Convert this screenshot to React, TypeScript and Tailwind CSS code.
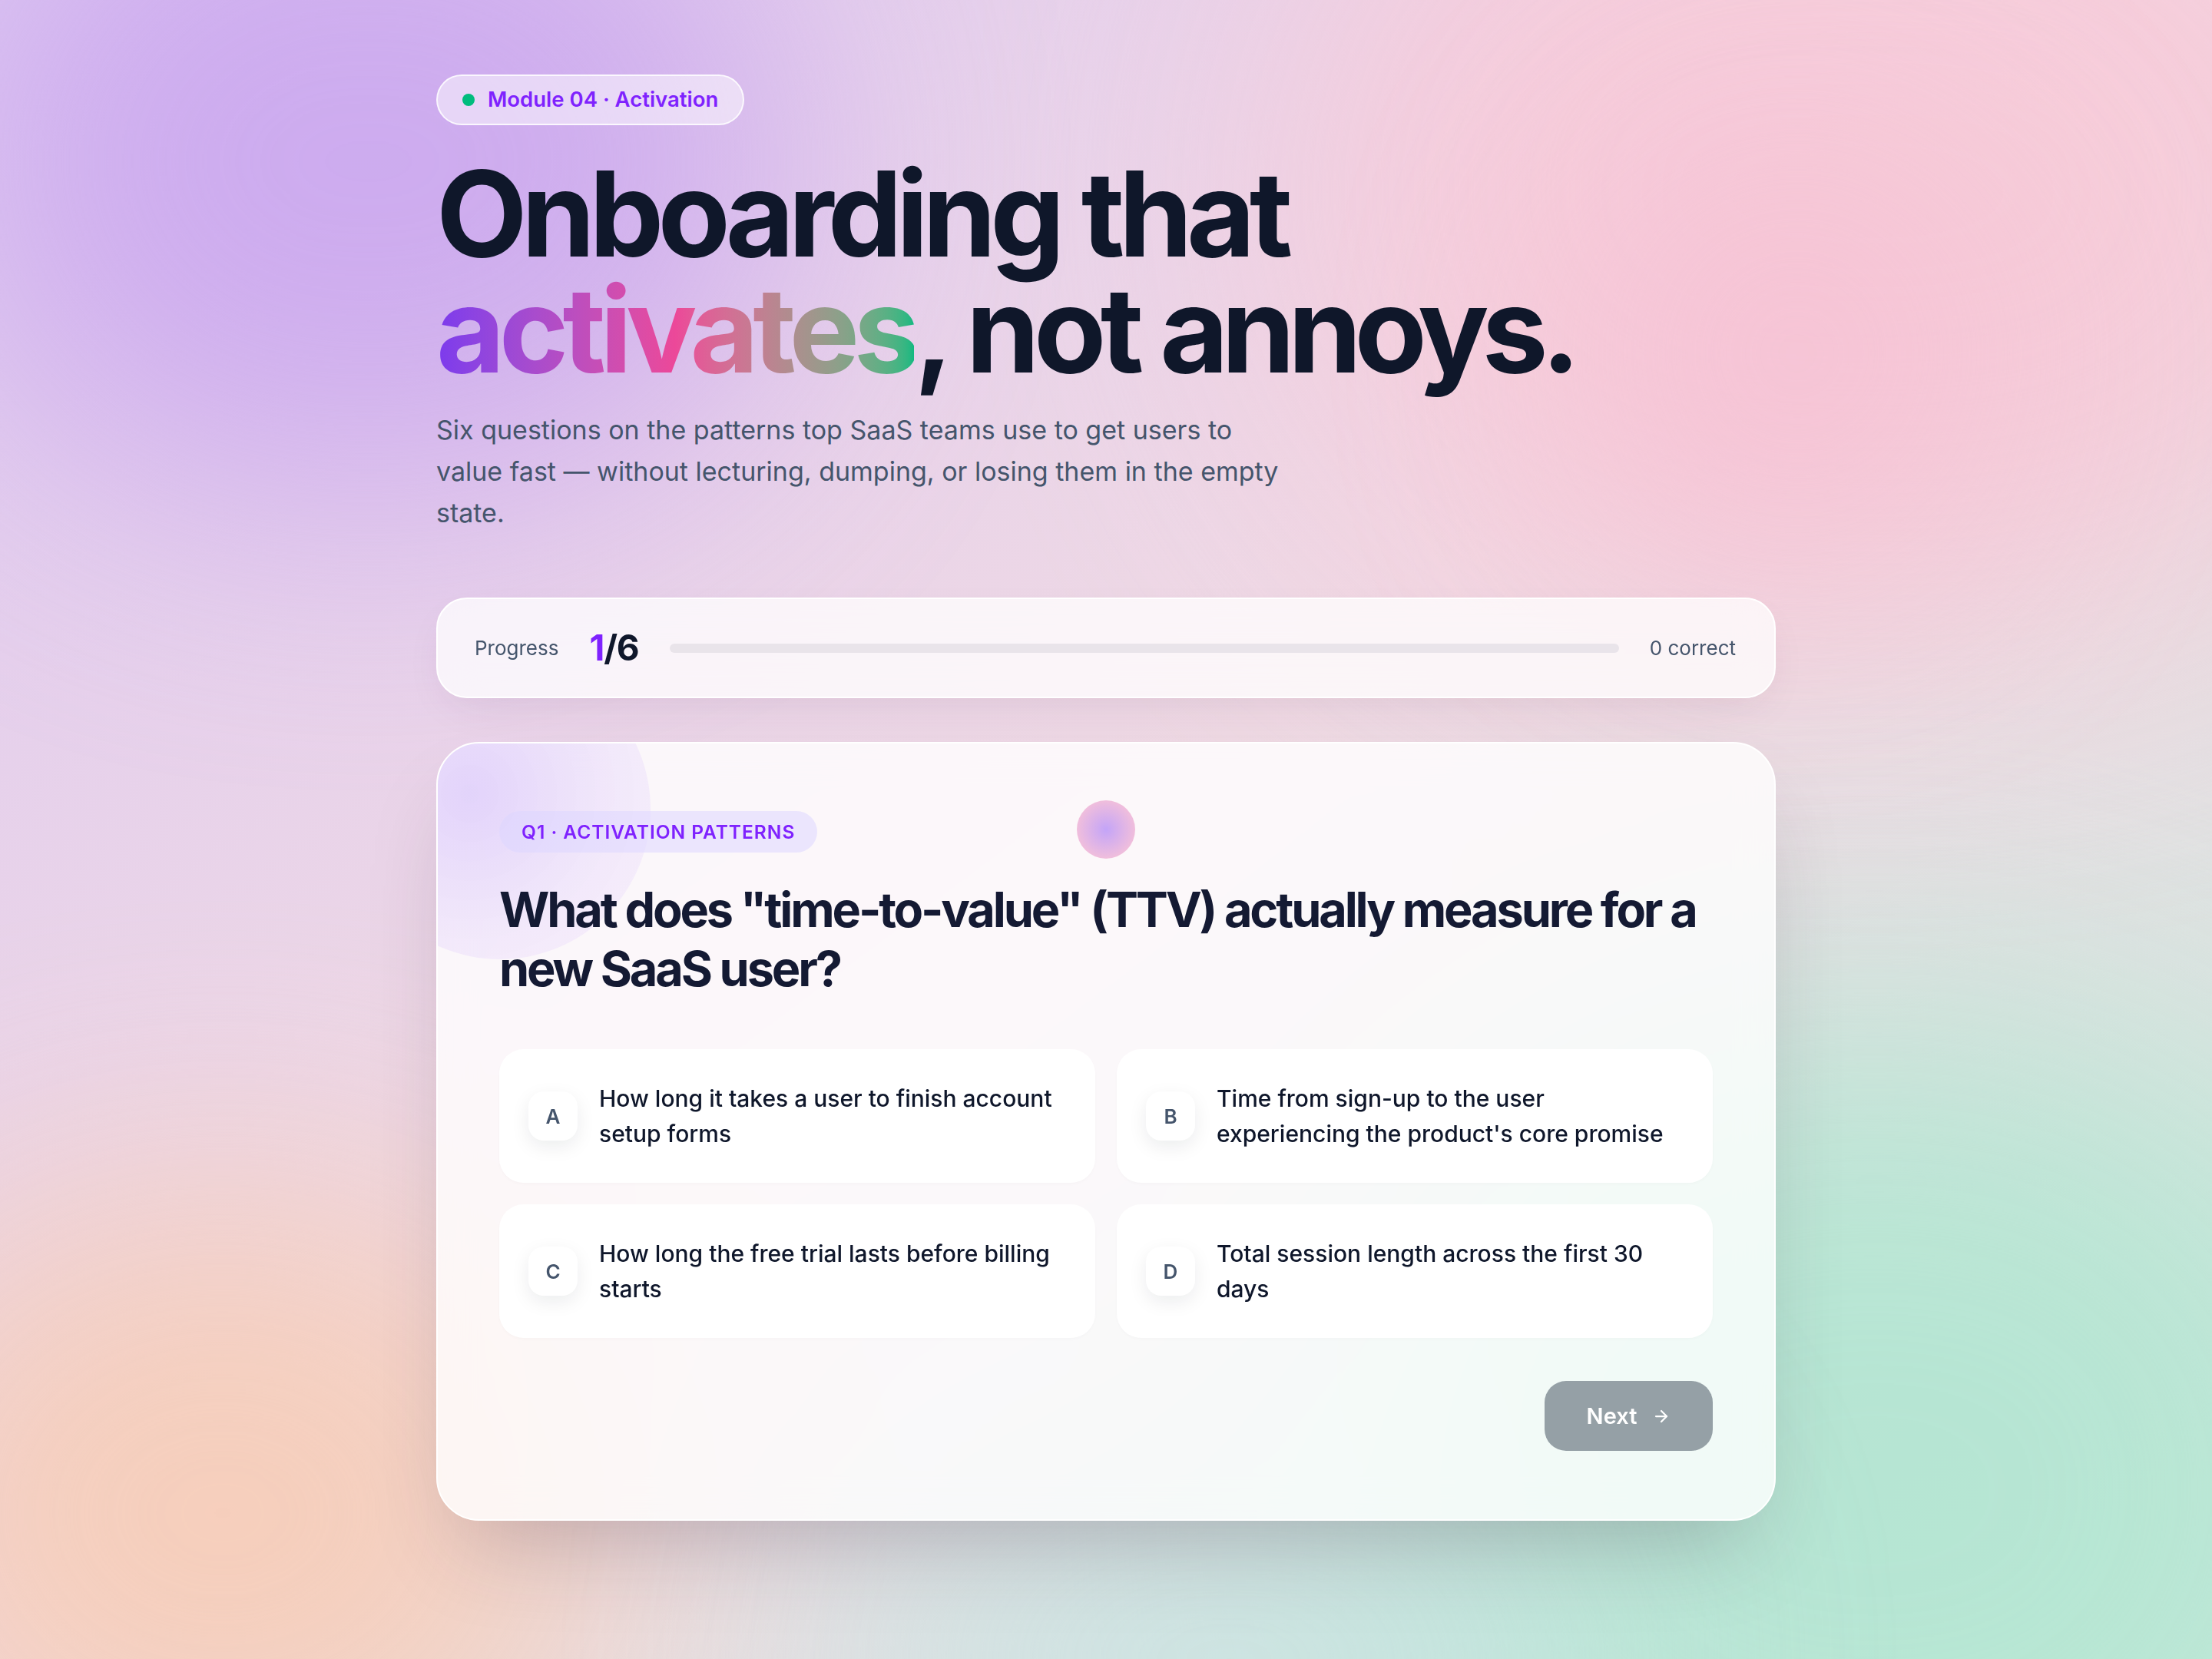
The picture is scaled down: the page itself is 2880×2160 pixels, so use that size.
import React from 'react';
import { ArrowRight } from 'lucide-react';

const options = [
  { key: 'A', text: 'How long it takes a user to finish account setup forms' },
  { key: 'B', text: "Time from sign-up to the user experiencing the product's core promise" },
  { key: 'C', text: 'How long the free trial lasts before billing starts' },
  { key: 'D', text: 'Total session length across the first 30 days' },
];

export default function App() {
  return (
    <div className="relative min-h-screen overflow-hidden bg-[#eedbe6] font-['Inter',sans-serif] text-slate-900">
      {/* Background glow */}
      <div className="pointer-events-none absolute inset-0">
        <div className="absolute inset-0 bg-gradient-to-br from-[#dfcaf1] via-[#efd9e4] to-[#d3e9e0]" />
        <div className="absolute left-[-60px] top-[-220px] h-[860px] w-[1080px] rounded-full bg-[#c6a0ef] opacity-75 blur-[180px]" />
        <div className="absolute right-[-300px] top-[-300px] h-[1100px] w-[1500px] rounded-full bg-[#f8cad8] opacity-85 blur-[200px]" />
        <div className="absolute right-[260px] top-[180px] h-[560px] w-[560px] rounded-full bg-[#f6bfd3] opacity-70 blur-[160px]" />
        <div className="absolute bottom-[-220px] left-[-200px] h-[820px] w-[980px] rounded-full bg-[#f7cdb5] opacity-85 blur-[180px]" />
        <div className="absolute bottom-[-380px] right-[-260px] h-[1200px] w-[1400px] rounded-full bg-[#b3e6d2] opacity-90 blur-[200px]" />
        <div className="absolute bottom-[-300px] left-[1100px] h-[600px] w-[1000px] rounded-full bg-[#c6e4e2] opacity-70 blur-[180px]" />
      </div>

      {/* cursor glow */}
      <div className="pointer-events-none absolute left-[1402px] top-[1042px] z-10 h-[76px] w-[76px] rounded-full bg-[radial-gradient(circle,#c3a4f8_0%,#f0bedc_70%,#f6c8dc_100%)]" />

      <main className="relative mx-auto w-[1744px] pt-[97px] pb-32">
        {/* Module badge */}
        <div className="inline-flex h-[66px] items-center gap-[17px] rounded-full border-2 border-white/80 bg-white/50 px-[32px] text-[27.5px] font-semibold text-violet-600">
          <span className="h-4 w-4 rounded-full bg-emerald-500" />
          Module 04 · Activation
        </div>

        <h1 className="mt-10 text-[154px] font-bold leading-[151px] tracking-[-0.05em] text-[#0f172a]">
          Onboarding that
          <br />
          <span className="bg-gradient-to-r from-[#7c3aed] via-[#ec4899] to-[#10b981] bg-clip-text text-transparent">
            activates
          </span>
          , not <span className="tracking-[-0.06em]">annoys</span>.
        </h1>

        <p className="mt-7 max-w-[1120px] text-[34px] leading-[54px] text-slate-600">
          Six questions on the patterns top SaaS teams use to get users to value fast — without lecturing,
          dumping, or losing them in the empty state.
        </p>

        {/* Progress */}
        <div className="mt-[83px] flex h-[131px] items-center gap-10 rounded-[40px] border-2 border-white bg-white/75 pl-12 pr-[50px] shadow-[0_20px_60px_-24px_rgba(80,40,90,0.15)] backdrop-blur-xl">
          <span className="text-[26px] text-slate-600">Progress</span>
          <span className="text-[46px] font-bold tracking-tight text-slate-900">
            <span className="text-violet-600">1</span>/6
          </span>
          <div className="h-3 flex-1 rounded-full bg-[#e9e4ea]" />
          <span className="text-[26px] text-slate-600">0 correct</span>
        </div>

        {/* Question card */}
        <section className="relative mt-[57px] overflow-hidden rounded-[56px] border-2 border-white bg-white/80 px-20 pt-[88px] pb-[89px] shadow-[0_60px_120px_-40px_rgba(60,40,60,0.28)] backdrop-blur-xl">
          <div className="pointer-events-none absolute -left-[115px] -top-[111px] h-[392px] w-[392px] rounded-full bg-[radial-gradient(circle_at_40%_45%,rgba(196,168,250,0.45),rgba(220,200,250,0.3)_60%,rgba(235,220,250,0.2))]" />

          <div className="relative">
            <span className="inline-flex h-[54px] items-center rounded-full bg-violet-200/55 px-[29px] text-[24.5px] font-semibold uppercase tracking-[0.04em] text-violet-600">
              Q1 · Activation patterns
            </span>

            <h2 className="mt-9 text-[63px] font-bold leading-[77px] tracking-[-0.05em] text-[#141a33]">
              What does "time-to-value" (TTV) actually measure for a new SaaS user?
            </h2>

            <div className="mt-[66px] grid grid-cols-2 gap-7">
              {options.map((o) => (
                <button
                  key={o.key}
                  className="flex items-center gap-7 rounded-[32px] border-2 border-white/70 bg-white/95 py-[39px] pl-[36px] pr-10 text-left shadow-[0_2px_4px_rgba(0,0,0,0.02)]"
                >
                  <span className="flex h-16 w-16 shrink-0 items-center justify-center rounded-[20px] bg-white text-[26px] font-semibold text-slate-600 shadow-[0_8px_24px_rgba(15,23,42,0.08)]">
                    {o.key}
                  </span>
                  <span className="text-[30px] font-medium leading-[46px] text-slate-900">{o.text}</span>
                </button>
              ))}
            </div>

            <div className="mt-14 flex justify-end">
              <button className="flex h-[91px] w-[219px] items-center justify-center gap-5 rounded-[28px] bg-[#95a0a6] text-[29px] font-semibold text-white">
                Next
                <ArrowRight size={24} strokeWidth={2.25} />
              </button>
            </div>
          </div>
        </section>
      </main>
    </div>
  );
}
